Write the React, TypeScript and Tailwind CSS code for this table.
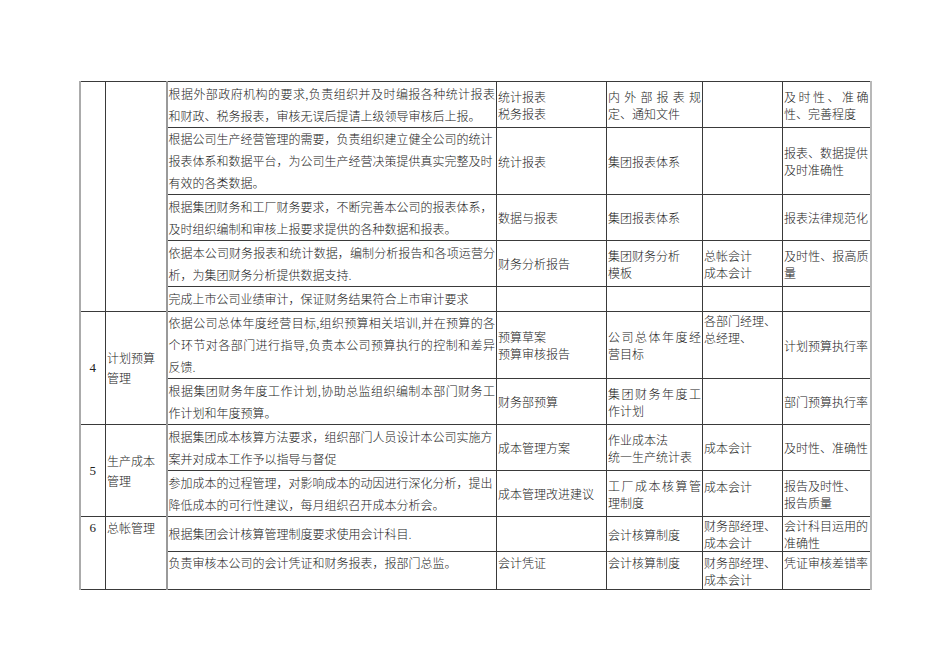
import React from 'react';

type C = { t?: string[]; j?: boolean; top?: boolean; pt?: string };

type Row = {
  h: string;
  d: C;
  c4: C;
  c5: C;
  c6: C;
  c7: C;
};

// 每个分组：编号、名称、各行内容
const groups: { no: string; name: string[]; nameTop?: boolean; rows: Row[] }[] = [
  {
    no: '',
    name: [],
    rows: [
      {
        h: 'h-[46px]',
        d: { t: ['根据外部政府机构的要求,负责组织并及时编报各种统计报表', '和财政、税务报表，审核无误后提请上级领导审核后上报。'], j: true },
        c4: { t: ['统计报表', '税务报表'] },
        c5: { t: ['内外部报表规', '定、通知文件'], j: true },
        c6: {},
        c7: { t: ['及时性、准确', '性、完善程度'], j: true },
      },
      {
        h: 'h-[66px]',
        d: { t: ['根据公司生产经营管理的需要，负责组织建立健全公司的统计', '报表体系和数据平台，为公司生产经营决策提供真实完整及时', '有效的各类数据。'] },
        c4: { t: ['统计报表'] },
        c5: { t: ['集团报表体系'] },
        c6: {},
        c7: { t: ['报表、数据提供', '及时准确性'] },
      },
      {
        h: 'h-[46px]',
        d: { t: ['根据集团财务和工厂财务要求，不断完善本公司的报表体系，', '及时组织编制和审核上报要求提供的各种数据和报表。'] },
        c4: { t: ['数据与报表'] },
        c5: { t: ['集团报表体系'] },
        c6: {},
        c7: { t: ['报表法律规范化'] },
      },
      {
        h: 'h-[46px]',
        d: { t: ['依据本公司财务报表和统计数据，编制分析报告和各项运营分', '析，为集团财务分析提供数据支持.'], j: true },
        c4: { t: ['财务分析报告'] },
        c5: { t: ['集团财务分析', '模板'] },
        c6: { t: ['总帐会计', '成本会计'] },
        c7: { t: ['及时性、报高质', '量'], j: true },
      },
      {
        h: 'h-[25px]',
        d: { t: ['完成上市公司业绩审计，保证财务结果符合上市审计要求'] },
        c4: {},
        c5: {},
        c6: {},
        c7: {},
      },
    ],
  },
  {
    no: '4',
    name: ['计划预算', '管理'],
    rows: [
      {
        h: 'h-[66px]',
        d: { t: ['依据公司总体年度经营目标,组织预算相关培训,并在预算的各', '个环节对各部门进行指导,负责本公司预算执行的控制和差异', '反馈.'], j: true },
        c4: { t: ['预算草案', '预算审核报告'] },
        c5: { t: ['公司总体年度经', '营目标'], j: true },
        c6: { t: ['各部门经理、', '总经理、'], top: true },
        c7: { t: ['计划预算执行率'] },
      },
      {
        h: 'h-[46px]',
        d: { t: ['根据集团财务年度工作计划,协助总监组织编制本部门财务工', '作计划和年度预算。'], j: true },
        c4: { t: ['财务部预算'] },
        c5: { t: ['集团财务年度工', '作计划'], j: true },
        c6: {},
        c7: { t: ['部门预算执行率'] },
      },
    ],
  },
  {
    no: '5',
    name: ['生产成本', '管理'],
    rows: [
      {
        h: 'h-[46px]',
        d: { t: ['根据集团成本核算方法要求，组织部门人员设计本公司实施方', '案并对成本工作予以指导与督促'] },
        c4: { t: ['成本管理方案'] },
        c5: { t: ['作业成本法', '统一生产统计表'] },
        c6: { t: ['成本会计'] },
        c7: { t: ['及时性、准确性'] },
      },
      {
        h: 'h-[46px]',
        d: { t: ['参加成本的过程管理，对影响成本的动因进行深化分析，提出', '降低成本的可行性建议，每月组织召开成本分析会。'] },
        c4: { t: ['成本管理改进建议'] },
        c5: { t: ['工厂成本核算管', '理制度'], j: true },
        c6: { t: ['成本会计'], top: true, pt: 'pt-[7px]' },
        c7: { t: ['报告及时性、', '报告质量'] },
      },
    ],
  },
  {
    no: '6',
    name: ['总帐管理'],
    nameTop: true,
    rows: [
      {
        h: 'h-[34px]',
        d: { t: ['根据集团会计核算管理制度要求使用会计科目.'] },
        c4: {},
        c5: { t: ['会计核算制度'] },
        c6: { t: ['财务部经理、', '成本会计'] },
        c7: { t: ['会计科目运用的', '准确性'] },
      },
      {
        h: 'h-[38px]',
        d: { t: ['负责审核本公司的会计凭证和财务报表，报部门总监。'], top: true },
        c4: { t: ['会计凭证'], top: true, pt: 'pt-[2px]' },
        c5: { t: ['会计核算制度'], top: true, pt: 'pt-[2px]' },
        c6: { t: ['财务部经理、', '成本会计'], top: true, pt: 'pt-[2px]' },
        c7: { t: ['凭证审核差错率'], top: true, pt: 'pt-[2px]' },
      },
    ],
  },
];

function Lines({ c, lh }: { c: C; lh: string }) {
  const t = c.t ?? [];
  return (
    <div className={`${lh} ${c.pt ?? ''}`}>
      {t.map((s, i) => (
        <div
          key={i}
          className={c.j && i < t.length - 1 ? 'whitespace-nowrap [text-align-last:justify] text-justify' : 'whitespace-nowrap'}
        >
          {s}
        </div>
      ))}
    </div>
  );
}

const cell = 'border border-[#3a3a3a] p-0 px-[1px] overflow-hidden';

export default function App() {
  return (
    <div className="min-h-[672px] w-full bg-white pt-[81px] font-['Noto_Sans_CJK_SC','Noto_Sans',sans-serif] font-light text-[12px] text-[#222]">
      <table className="mx-auto w-[791px] table-fixed border-collapse border-t border-b border-[#3a3a3a] border-l-2 border-l-[#ababab] border-r-2 border-r-[#b8b8b8]">
        <colgroup>
          <col className="w-[26px]" />
          <col className="w-[61px]" />
          <col className="w-[330px]" />
          <col className="w-[110px]" />
          <col className="w-[96px]" />
          <col className="w-[80px]" />
          <col className="w-[88px]" />
        </colgroup>
        <tbody>
          {groups.map((g, gi) =>
            g.rows.map((r, ri) => (
              <tr key={`${gi}-${ri}`} className={r.h}>
                {ri === 0 && (
                  <>
                    <td
                      rowSpan={g.rows.length}
                      className={`${cell} border-l-2 border-l-[#ababab] text-center font-['Liberation_Serif',serif] font-normal text-[13px] ${g.nameTop ? 'align-top pt-[2px] leading-[17px]' : 'align-middle'}`}
                    >
                      {g.no}
                    </td>
                    <td
                      rowSpan={g.rows.length}
                      className={`${cell} ${g.nameTop ? 'align-top pt-[2px]' : 'align-middle'}`}
                    >
                      <div className={g.nameTop ? 'leading-[17px]' : 'leading-[20px]'}>
                        {g.name.map((s, i) => (
                          <div key={i} className="whitespace-nowrap">
                            {s}
                          </div>
                        ))}
                      </div>
                    </td>
                  </>
                )}
                <td className={`${cell} border-l-2 border-l-[#9a9a9a] pl-[1px] ${r.d.top ? 'align-top' : 'align-middle'}`}>
                  <Lines c={r.d} lh="leading-[22px]" />
                </td>
                {[r.c4, r.c5, r.c6, r.c7].map((c, ci) => (
                  <td key={ci} className={`${cell} ${c.top ? 'align-top' : 'align-middle'}`}>
                    <Lines c={c} lh="leading-[17px]" />
                  </td>
                ))}
              </tr>
            ))
          )}
        </tbody>
      </table>
    </div>
  );
}
